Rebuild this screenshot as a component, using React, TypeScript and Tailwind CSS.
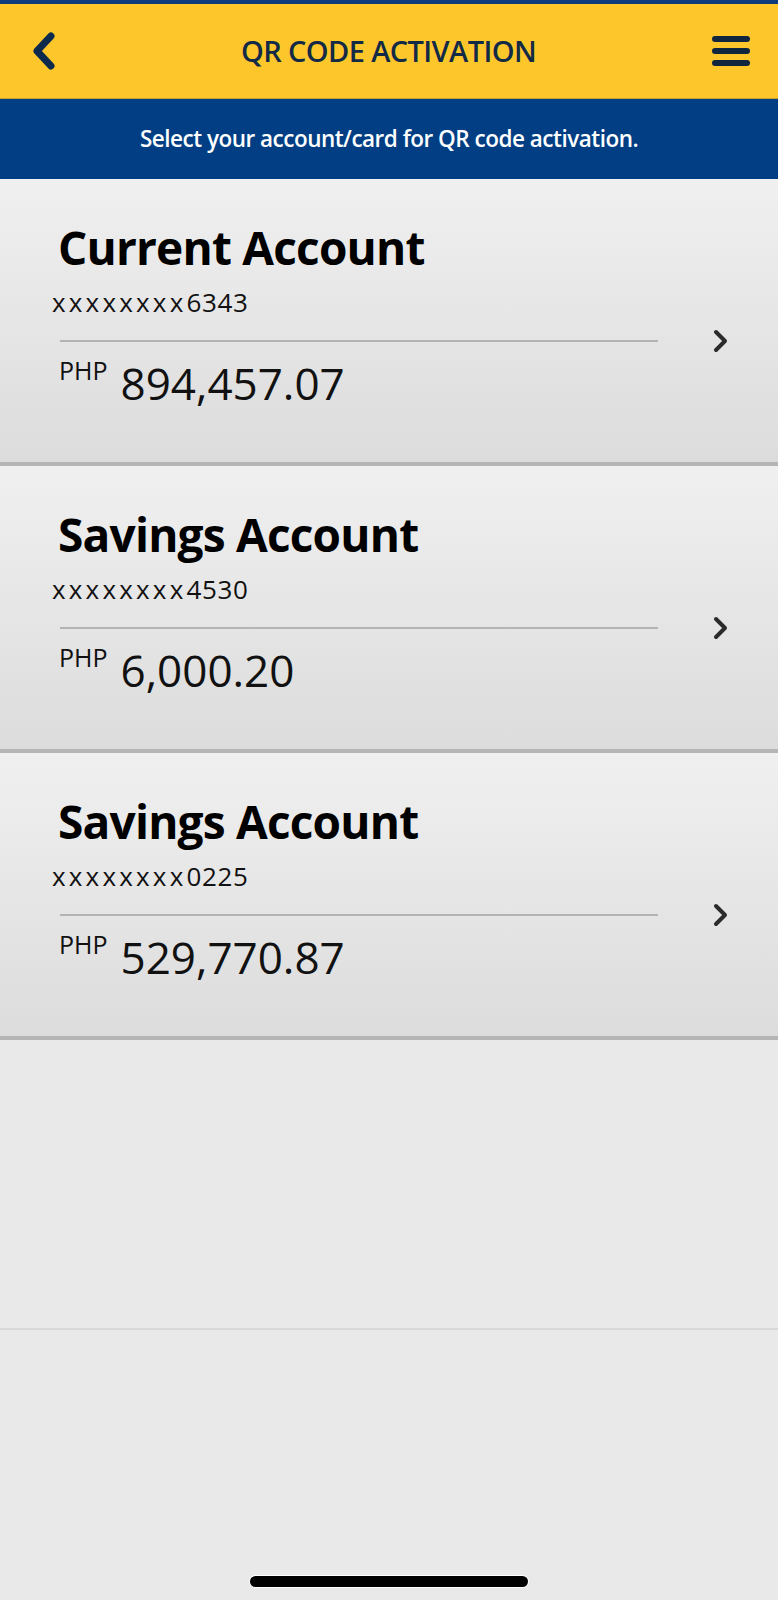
import React from "react";

const accounts = [
  { name: "Current Account", num: "6343", amount: "894,457.07" },
  { name: "Savings Account", num: "4530", amount: "6,000.20" },
  { name: "Savings Account", num: "0225", amount: "529,770.87" },
];

function Card({ name, num, amount }: { name: string; num: string; amount: string }) {
  return (
    <div className="h-[287px] bg-gradient-to-b from-[#f0f0f0] to-[#dcdcdc] border-b-4 border-[#b5b5b5] flex">
      <div className="w-[658px] flex flex-col pt-[40px]">
        <div className="pl-[58px] text-[46px] leading-[56px] font-bold text-black tracking-[-0.8px]">{name}</div>
        <div className="pl-[52px] mt-[11px] text-[26px] leading-[32px] text-[#111]">
          <span className="tracking-[3.2px]">xxxxxxxx</span>
          <span className="tracking-[0.6px]">{num}</span>
        </div>
        <div className="ml-[60px] mt-[22px] h-[2px] bg-[#b3b3b3]" />
        <div className="pl-[59px] mt-[14px] flex items-start">
          <span className="text-[25px] leading-[28px] text-[#111]">PHP</span>
          <span className="ml-[13px] mt-[3px] text-[44px] leading-[48px] text-[#111]">{amount}</span>
        </div>
      </div>
      <div className="flex-1 flex justify-center pt-[150px] pl-[6px]">
        <svg width="16" height="24" viewBox="0 0 16 24">
          <polyline points="3,3 12,12 3,21" fill="none" stroke="#2b2b2b" strokeWidth="4" strokeLinecap="round" strokeLinejoin="round" />
        </svg>
      </div>
    </div>
  );
}

export default function App() {
  return (
    <div className="w-[778px] min-h-[1600px] bg-[#e9e9e9] flex flex-col font-['Open_Sans',sans-serif]">
      <div className="h-[4px] bg-[#0c3c7c]" />
      <div className="h-[95px] bg-[#fdc72c] border-b border-[#c9a02a] flex items-center pl-[31px] pr-[28px] relative">
        <svg width="26" height="38" viewBox="0 0 26 38">
          <polyline points="20,4 6,19 20,34" fill="none" stroke="#0d2a4c" strokeWidth="7" strokeLinecap="round" strokeLinejoin="round" />
        </svg>
        <div className="flex-1 text-center text-[29px] font-semibold text-[#122a45] tracking-[-0.6px] pl-[8px]">QR CODE ACTIVATION</div>
        <div className="flex flex-col gap-[6px] w-[38px]">
          <div className="h-[6px] rounded-full bg-[#10263f]" />
          <div className="h-[6px] rounded-full bg-[#10263f]" />
          <div className="h-[6px] rounded-full bg-[#10263f]" />
        </div>
      </div>
      <div className="h-[80px] bg-[#013e83] flex items-center justify-center text-white text-[22.5px] font-semibold tracking-[-0.5px]">
        Select your account/card for QR code activation.
      </div>
      {accounts.map((a, i) => (
        <Card key={i} {...a} />
      ))}
      <div className="h-[290px] bg-[#e9e9e9] border-b-2 border-[#d9d9d9]" />
      <div className="flex-1 flex flex-col justify-end items-center pb-[13px]">
        <div className="w-[278px] h-[11px] rounded-full bg-black ring-1 ring-white" />
      </div>
    </div>
  );
}
